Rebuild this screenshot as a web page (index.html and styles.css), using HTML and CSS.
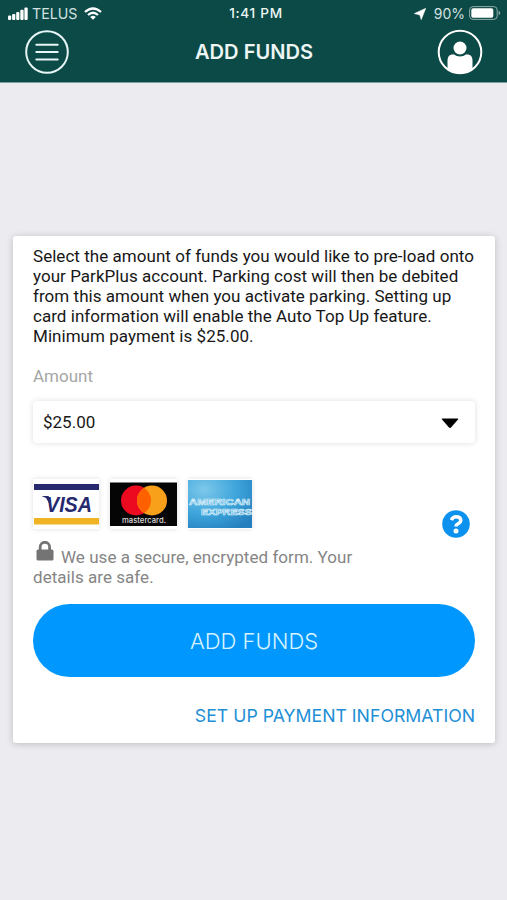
FILE: index.html
```html
<!DOCTYPE html>
<html lang="en">
<head>
<meta charset="utf-8">
<title>Add Funds</title>
<link rel="stylesheet" href="styles.css">
</head>
<body>
<header class="header">
  <div class="status">
    <div class="status-left">
      <svg class="signal" width="20" height="13" viewBox="0 0 20 13" fill="#fff"><rect y="8.5" width="3.2" height="4.5" rx="1"/><rect x="4.1" y="7" width="3.2" height="6" rx="1"/><rect x="8.2" y="5" width="3.2" height="8" rx="1"/><rect x="12.3" y="2.8" width="3.3" height="10.2" rx="1"/><rect x="16.4" y="0.5" width="3.3" height="12.5" rx="1"/></svg>
      <span class="carrier">TELUS</span>
      <svg class="wifi" width="18" height="13" viewBox="0 0 18 13" fill="none" stroke="#fff" stroke-width="2.3"><path d="M1 5Q9-2 17 5M4 8Q9 3.6 14 8"/><path d="M6.2 10Q9 7.6 11.8 10L9 12.8Z" fill="#fff" stroke="none"/></svg>
    </div>
    <span class="time">1:41 PM</span>
    <div class="status-right">
      <svg class="location" width="12" height="12" viewBox="0 0 12 12"><path d="M11.8.3 7.2 11.7 5.8 7 .3 5.6Z" fill="#fff" stroke="#fff" stroke-width=".5"/></svg>
      <span class="percent">90%</span>
      <svg class="battery" width="32" height="14" viewBox="0 0 32 14"><rect x=".6" y=".6" width="27.6" height="12.8" rx="3.4" fill="none" stroke="#91abaa"/><rect x="2.3" y="2.3" width="22" height="9.4" rx="1.8" fill="#fff"/><path d="M29.6 4.7Q31.3 5.4 31.3 7T29.6 9.3Z" fill="#91abaa"/></svg>
    </div>
  </div>
  <nav class="nav">
    <svg class="menu" width="44" height="44" viewBox="0 0 44 44" fill="none" stroke="#e6f5f5" stroke-width="2"><circle cx="22" cy="22" r="20.8"/><path d="M11.3 14.7H32.7M11.3 22H32.7M11.3 29.4H32.7" stroke-linecap="round"/></svg>
    <h1 class="title">ADD FUNDS</h1>
    <svg class="profile" width="46" height="46" viewBox="0 0 46 46"><circle cx="23" cy="23" r="21.3" fill="none" stroke="#fff" stroke-width="2"/><circle cx="23" cy="19" r="6.5" fill="#fff"/><path d="M10.5 40V31.5Q10.5 25.2 16.5 25.2Q23 30 29.5 25.2Q35.5 25.2 35.5 31.5V40Q23 49 10.5 40Z" fill="#fff"/></svg>
  </nav>
</header>
<main class="card">
  <p class="intro">Select the amount of funds you would like to pre-load onto<br>your ParkPlus account. Parking cost will then be debited<br>from this amount when you activate parking. Setting up<br>card information will enable the Auto Top Up feature.<br>Minimum payment is $25.00.</p>
  <div class="label">Amount</div>
  <div class="select"><span>$25.00</span><svg width="18" height="11" viewBox="0 0 18 11"><path d="M1.2.5H16.8Q17.8.8 17 1.6L10 9.6Q9 10.5 8 9.6L1 1.6Q.2.8 1.2.5Z"/></svg></div>
  <div class="payment">
    <div class="brands">
      <svg class="brand" width="66" height="50" viewBox="0 0 66 50"><rect width="66" height="50" fill="#fff"/><rect x="1" y="5" width="65" height="6" fill="#27296f"/><rect x="1" y="39" width="65" height="6.5" fill="#efb323"/><path d="M8.5 17H15.5L17.5 21 16.5 25 13 19Z" fill="#27296f"/><text x="13" y="33.2" textLength="46" lengthAdjust="spacingAndGlyphs" font-family="Liberation Sans, sans-serif" font-size="22.5" font-weight="700" font-style="italic" fill="#27296f">VISA</text></svg>
      <svg class="brand" width="67" height="50" viewBox="0 0 67 50"><rect width="67" height="50" fill="#fff"/><rect y="3.5" width="67" height="43.5" fill="#050505"/><circle cx="26" cy="21.5" r="15" fill="#eb0a20"/><circle cx="42" cy="21.5" r="15" fill="#f9a01b"/><path d="M34 8.8A15 15 0 0 1 34 34.2A15 15 0 0 1 34 8.8Z" fill="#ff6000"/><text x="12" y="43.5" textLength="44" lengthAdjust="spacingAndGlyphs" font-family="Inter, sans-serif" font-size="8" font-weight="500" fill="#ddd">mastercard.</text></svg>
      <svg class="brand" width="64" height="50" viewBox="0 0 64 50"><defs><radialGradient id="blue" cx=".25" cy=".2" r=".95"><stop stop-color="#7dc8eb"/><stop offset=".55" stop-color="#3da4da"/><stop offset="1" stop-color="#257fbe"/></radialGradient></defs><rect y="1" width="64" height="48" fill="url(#blue)"/><g fill="#4aa3d8" stroke="#d7effa" stroke-width=".7" font-family="Liberation Sans, sans-serif" font-size="9.2" font-weight="700"><text x="1" y="25.5" textLength="61" lengthAdjust="spacingAndGlyphs">AMERICAN</text><text x="13" y="36" textLength="51" lengthAdjust="spacingAndGlyphs">EXPRESS</text></g></svg>
    </div>
    <svg class="help" width="28" height="28" viewBox="0 0 28 28"><circle cx="14" cy="14" r="13.8" fill="#0c91ef"/><path d="M9.4 10.1Q10.7 6.7 14.1 6.7Q18.8 6.7 18.8 10.5Q18.8 12.3 16.5 13.6Q14 15 14 16.6" fill="none" stroke="#fff" stroke-width="3.5"/><circle cx="14" cy="21" r="2.5" fill="#fff"/></svg>
  </div>
  <p class="secure"><svg class="lock" width="18" height="20" viewBox="0 0 18 20"><path d="M4.2 10V6A4.7 4.7 0 0 1 13.6 6V10" fill="none" stroke="#747474" stroke-width="2.8"/><rect x=".5" y="8.6" width="17" height="10.9" rx="1.6" fill="#747474"/></svg>We use a secure, encrypted form. Your<br>details are safe.</p>
  <button class="add"><span>ADD FUNDS</span></button>
  <a class="setup">SET UP PAYMENT INFORMATION</a>
</main>
</body>
</html>
```

FILE: styles.css
```css
* { box-sizing: border-box; }
body { margin: 0; height: 900px; overflow: hidden; background: #ebebf0; font-family: Roboto, sans-serif; color: #171717; }
svg { display: block; flex: none; }
.header { height: 83px; background: #0b4a46; border-bottom: 1px solid #7e9fa0; color: #fff; font-family: Inter, sans-serif; }
.status { height: 27px; padding: 0 8px; display: grid; grid-template-columns: 1fr auto 1fr; align-items: center; line-height: 27px; }
.status-left, .status-right { display: flex; align-items: center; }
.status-right { justify-content: flex-end; }
.signal { margin-top: -1px; }
.wifi { margin-top: -1px; }
.carrier { margin: 0 7px 0 4px; font-size: 14.2px; color: #d3e2e1; }
.time { padding-left: 5px; font-size: 13.6px; font-weight: 500; letter-spacing: .7px; color: #eef5f4; }
.percent { margin: 0 4px 0 8px; font-size: 14px; color: #d3e2e1; }
.battery { margin: -1px -2px 0 0; }
.nav { height: 50px; padding: 0 24px 0 25px; display: grid; grid-template-columns: 46px 1fr 46px; align-items: center; }
.title { margin: 0; text-align: center; font-size: 20.1px; font-weight: 600; line-height: 24px; color: #edf5f5; }
.card { width: 482px; height: 507px; margin: 153px 0 0 13px; padding: 10px 20px 0; border-radius: 3px; background: #fff; box-shadow: 0 1px 7px #0003; display: flex; flex-direction: column; }
.intro, .secure { margin: 0; font-size: 17px; line-height: 20px; letter-spacing: .04px; white-space: nowrap; }
.label { margin-top: 20px; height: 20px; font-size: 17px; line-height: 20px; color: #a6a6a6; }
.select { margin-top: 15px; height: 42px; padding: 0 16px 0 10px; display: flex; align-items: center; justify-content: space-between; border-radius: 4px; box-shadow: 0 0 6px #0002; font-size: 17px; }
.select svg { margin-top: 2px; }
.payment { margin-top: 36px; height: 60px; display: flex; justify-content: space-between; align-items: flex-start; }
.brands { display: flex; gap: 11px; }
.brand { box-shadow: 0 0 5px #0002; }
.help { margin: 31px 5px 0 0; }
.secure { height: 40px; margin-top: 8px; color: #858585; }
.lock { display: inline-block; margin: -7px 7px 0 3px; vertical-align: 2px; }
.add { margin-top: 17px; height: 73px; padding: 0; border: 0; border-radius: 37px; background: #0098ff; color: #d7f3ff; font: 300 22px Inter, sans-serif; }
.setup { margin-top: 29px; align-self: flex-end; font: 400 17.7px/20px Inter, sans-serif; color: #218fd5; white-space: nowrap; }
```
